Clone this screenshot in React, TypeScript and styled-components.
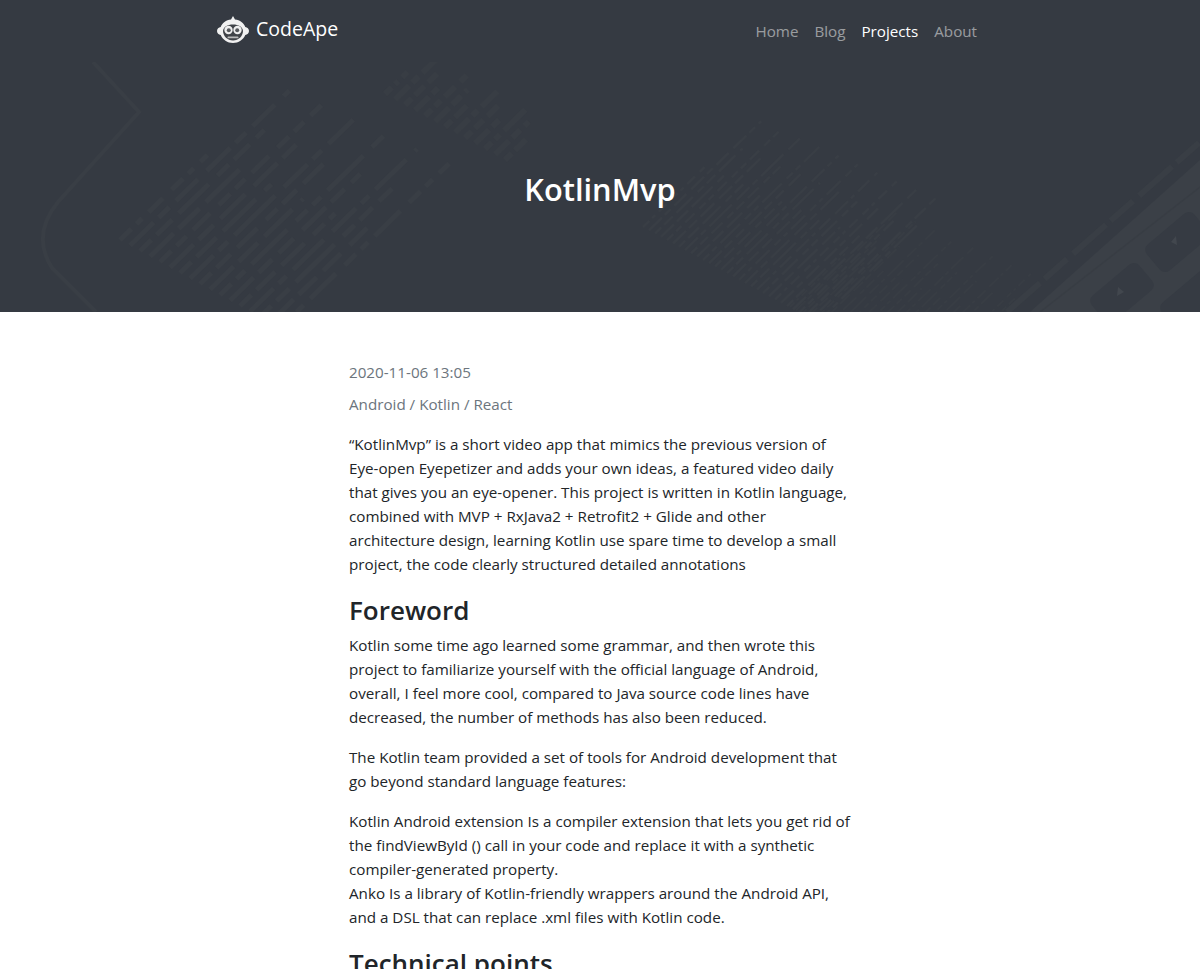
import styled, { createGlobalStyle } from "styled-components";

const GlobalStyle = createGlobalStyle`
  html, body {
    margin: 0;
    padding: 0;
    background: #fff;
  }
  body {
    font-family: "Open Sans", "Liberation Sans", sans-serif;
    font-size: 15.2px;
    line-height: 24px;
    color: #212529;
    overflow: hidden;
    height: 969px;
  }
`;

const TopBar = styled.div`
  background: #353a42;
  height: 62px;
`;

const Navbar = styled.nav`
  width: 780px;
  height: 62px;
  margin: 0 auto;
  padding: 0 13px 0 7px;
  display: flex;
  justify-content: space-between;
  box-sizing: border-box;
`;

const Brand = styled.a`
  display: flex;
  align-items: center;
  align-self: flex-start;
  gap: 7px;
  margin-top: 14px;
  font-size: 19.5px;
  line-height: 30px;
  color: #fff;
`;

const NavLinks = styled.ul`
  display: flex;
  gap: 16px;
  list-style: none;
  margin: 19px 0 0;
  padding: 0;
`;

const NavLink = styled.li<{ $active?: boolean }>`
  color: ${(p) => (p.$active ? "#fff" : "rgba(255, 255, 255, 0.5)")};
`;

const HeroBody = styled.header`
  position: relative;
  height: 250px;
  background: #353a42;
  overflow: hidden;
  display: flex;
  align-items: center;
  justify-content: center;
`;

const HeroArt = styled.svg`
  position: absolute;
  left: 0;
  top: 0;
  width: 1200px;
  height: 250px;
`;

const HeroTitle = styled.h1`
  position: relative;
  margin: 4px 0 0;
  font-size: 30.8px;
  line-height: 38px;
  font-weight: 600;
  color: #fff;
`;

const Article = styled.main`
  width: 504px;
  margin: 0 0 0 349px;
  padding: 48px 0 0;
`;

const Meta = styled.p<{ $gap: number }>`
  margin: 0 0 ${(p) => p.$gap}px;
  color: #6c757d;
`;

const Para = styled.p`
  margin: 0 0 16px;
`;

const Heading = styled.h2`
  margin: 0 0 5px;
  padding-top: 2px;
  font-size: 26px;
  line-height: 33.6px;
  font-weight: 600;
`;

const Logo = () => (
  <svg width="32" height="27" viewBox="0 0 32 27">
    <path d="M16 0l2 3.600c5 .5 8.800 3.400 10.300 7.400 2 .3 3.700 1.900 3.700 4s-1.700 3.700-3.700 4C26.300 23.600 21.600 27 16 27S5.700 23.600 3.700 19C1.700 18.700 0 17.100 0 15s1.700-3.700 3.700-4C5.200 7 9 4.100 14 3.600z" fill="#f1f1f1" />
    <path d="M6 15c0-3.800 4.500-6.500 10-6.500S26 11.200 26 15c0 5-4.500 9.500-10 9.500S6 20 6 15z" fill="#3f4247" />
    <circle cx="11.500" cy="14" r="4.200" fill="#eee" />
    <circle cx="20.500" cy="14" r="4.200" fill="#eee" />
    <circle cx="11.800" cy="14.300" r="2" fill="#55585c" />
    <circle cx="20.200" cy="14.300" r="2" fill="#55585c" />
    <rect x="10.500" y="20.500" width="11" height="1.800" rx="0.900" fill="#bbb" />
  </svg>
);

// pseudo random dash pattern so the code lines do not look regular
const dashes = (i: number, scale: number) =>
  [16 + ((i * 17) % 34), 7, 8 + ((i * 29) % 22), 9, 20 + ((i * 11) % 40), 12]
    .map((n) => n * scale)
    .join(" ");

type Block = { x: number; y: number; count: number; step: number; len: number; width: number; scale: number; color: string };

// each block is a bit of the rotated source code in the hero photo
const blocks: Block[] = [
  { x: 120, y: 178, count: 17, step: 10, len: 270, width: 5, scale: 1, color: "#393e45" },
  { x: 385, y: 32, count: 13, step: 10, len: 70, width: 6, scale: 0.6, color: "#383d44" },
  { x: 643, y: 165, count: 30, step: 6, len: 190, width: 2.5, scale: 0.55, color: "#393e45" },
  { x: 790, y: 245, count: 24, step: 6, len: 170, width: 2, scale: 0.4, color: "#383d44" },
];

const Art = () => (
  <HeroArt viewBox="0 0 1200 250" fill="none">
    <path d="M93 0l46 50L58 140c-18 22-20 44-6 66l44 44" stroke="#393e45" strokeWidth="4" />
    {blocks.map((b) => (
      <g key={b.x} stroke={b.color} strokeWidth={b.width}>
        {Array.from({ length: b.count }, (_, i) => {
          const x = b.x + i * b.step;
          const y = b.y + i * b.step * 0.55;
          const len = b.len * (0.45 + ((i * 37) % 55) / 100);
          return <line key={i} x1={x} y1={y} x2={x + len * 0.72} y2={y - len * 0.7} strokeDasharray={dashes(i, b.scale)} />;
        })}
      </g>
    ))}
    <path d="M1030 250L1200 98V250z" fill="#3b4047" />
    <path d="M1007 250L1200 80" stroke="#393e45" strokeWidth="6" strokeDasharray="44 6 30 8" />
    <path d="M1040 250L1200 125" stroke="#383d44" strokeWidth="1.500" />
    <g fill="#363b43">
      <rect x="-31" y="-17" width="62" height="34" rx="7" transform="translate(1177 180) rotate(-40)" />
      <rect x="-31" y="-17" width="62" height="34" rx="7" transform="translate(1122 231) rotate(-40)" />
      <rect x="-31" y="-17" width="62" height="34" rx="7" transform="translate(1192 238) rotate(-40)" />
    </g>
    <g fill="#42474e">
      <path d="M1176 174l-5 6 6 3z" />
      <path d="M1118 225l-1 9 7-4z" />
    </g>
  </HeroArt>
);

export default function App() {
  return (
    <>
      <GlobalStyle />
      <TopBar>
        <Navbar>
          <Brand>
            <Logo />
            CodeApe
          </Brand>
          <NavLinks>
            <NavLink>Home</NavLink>
            <NavLink>Blog</NavLink>
            <NavLink $active>Projects</NavLink>
            <NavLink>About</NavLink>
          </NavLinks>
        </Navbar>
      </TopBar>
      <HeroBody>
        <Art />
        <HeroTitle>KotlinMvp</HeroTitle>
      </HeroBody>
      <Article>
        <Meta $gap={8}>2020-11-06 13:05</Meta>
        <Meta $gap={16}>Android / Kotlin / React</Meta>
        <Para>
          “KotlinMvp” is a short video app that mimics the previous version of Eye-open Eyepetizer and adds your own ideas, a featured video daily that gives you an eye-opener. This project is written in Kotlin language, combined with MVP + RxJava2 + Retrofit2 + Glide and other architecture design, learning Kotlin use spare time to develop a small project, the code clearly structured detailed annotations
        </Para>
        <Heading>Foreword</Heading>
        <Para>
          Kotlin some time ago learned some grammar, and then wrote this project to familiarize yourself with the official language of Android, overall, I feel more cool, compared to Java source code lines have decreased, the number of methods has also been reduced.
        </Para>
        <Para>
          The Kotlin team provided a set of tools for Android development that go beyond standard language features:
        </Para>
        <Para>
          Kotlin Android extension Is a compiler extension that lets you get rid of the findViewById () call in your code and replace it with a synthetic compiler-generated property.
          <br />
          Anko Is a library of Kotlin-friendly wrappers around the Android API, and a DSL that can replace .xml files with Kotlin code.
        </Para>
        <Heading>Technical points</Heading>
      </Article>
    </>
  );
}
